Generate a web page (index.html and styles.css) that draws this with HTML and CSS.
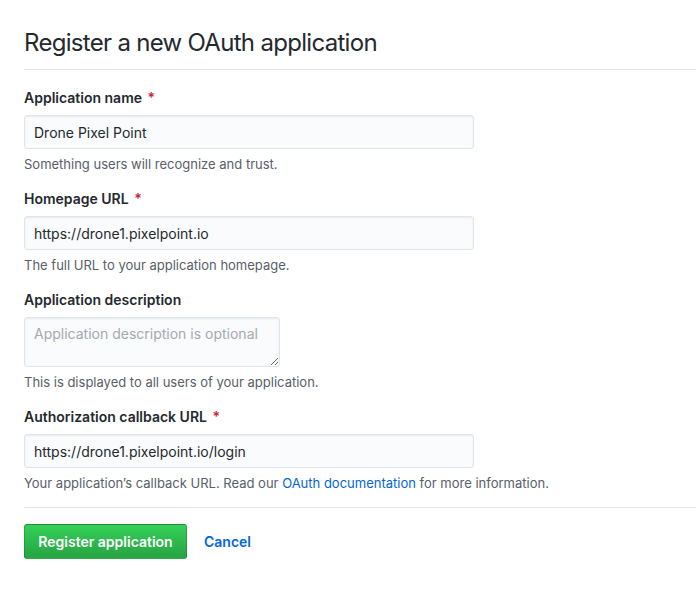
FILE: index.html
```html
<!DOCTYPE html>
<html lang="en">
<head>
<meta charset="utf-8">
<title>Register a new OAuth application</title>
<link rel="stylesheet" href="styles.css">
</head>
<body>
<main class="page">
  <h1 class="title">Register a new OAuth application</h1>
  <form class="form">
    <div class="group">
      <label class="label" for="name">Application name <span class="req">*</span></label>
      <input class="input" id="name" type="text" value="Drone Pixel Point">
      <p class="note">Something users will recognize and trust.</p>
    </div>
    <div class="group">
      <label class="label" for="url">Homepage URL <span class="req">*</span></label>
      <input class="input" id="url" type="text" value="https://drone1.pixelpoint.io">
      <p class="note">The full URL to your application homepage.</p>
    </div>
    <div class="group">
      <label class="label" for="desc">Application description</label>
      <textarea class="textarea" id="desc" placeholder="Application description is optional"></textarea>
      <p class="note">This is displayed to all users of your application.</p>
    </div>
    <div class="group">
      <label class="label" for="cb">Authorization callback URL <span class="req">*</span></label>
      <input class="input" id="cb" type="text" value="https://drone1.pixelpoint.io/login">
      <p class="note">Your application’s callback URL. Read our <a class="link" href="#">OAuth documentation</a> for more information.</p>
    </div>
    <div class="actions">
      <button class="btn" type="button">Register application</button>
      <a class="cancel" href="#">Cancel</a>
    </div>
  </form>
</main>
</body>
</html>
```

FILE: styles.css
```css
* { box-sizing: border-box; }
html, body { margin: 0; padding: 0; background: #fff; }
body {
  font-family: Inter, "Liberation Sans", sans-serif;
  color: #24292e;
  font-size: 14px;
}
.page { padding: 28px 0 0 24px; }
.title {
  margin: 0;
  font-size: 24px;
  font-weight: 400;
  letter-spacing: -0.7px;
  line-height: 30px;
  padding-bottom: 11px;
  border-bottom: 1px solid #e1e4e8;
}
.form { display: flex; flex-direction: column; }
.group { display: flex; flex-direction: column; align-items: flex-start; margin-top: 16px; }
.group:first-child { margin-top: 18px; }
.label {
  font-weight: 600;
  font-size: 14px;
  line-height: 20px;
  margin-bottom: 7px;
}
.req { color: #cb2431; margin-left: 2px; }
.input, .textarea {
  font-family: inherit;
  font-size: 14px;
  color: #24292e;
  background: #fafbfc;
  border: 1px solid #e1e4e8;
  border-radius: 3px;
  box-shadow: inset 0 1px 2px rgba(27,31,35,.075);
  padding: 6px 9px;
  outline: none;
  margin: 0;
}
.input { width: 450px; height: 34px; }
.textarea {
  width: 256px;
  height: 50px;
  resize: vertical;
  line-height: 20px;
  padding: 6px 9px;
}
.textarea::placeholder { color: #a3aab1; }
.note {
  margin: 6px 0 0;
  font-size: 13px;
  line-height: 18px;
  color: #586069;
}
.link { color: #0366d6; text-decoration: none; }
.actions {
  margin-top: 15px;
  border-top: 1px solid #e1e4e8;
  padding-top: 16px;
  display: flex;
  align-items: center;
  gap: 17px;
}
.btn {
  font-family: inherit;
  font-size: 14px;
  font-weight: 600;
  color: #fff;
  height: 35px;
  width: 163px;
  padding: 0 12px;
  border: 1px solid rgba(27,31,35,.2);
  border-radius: 3px;
  background-image: linear-gradient(-180deg, #34d058 0%, #28a745 90%);
  cursor: pointer;
}
.cancel {
  color: #0366d6;
  font-weight: 600;
  font-size: 14px;
  text-decoration: none;
}
```
